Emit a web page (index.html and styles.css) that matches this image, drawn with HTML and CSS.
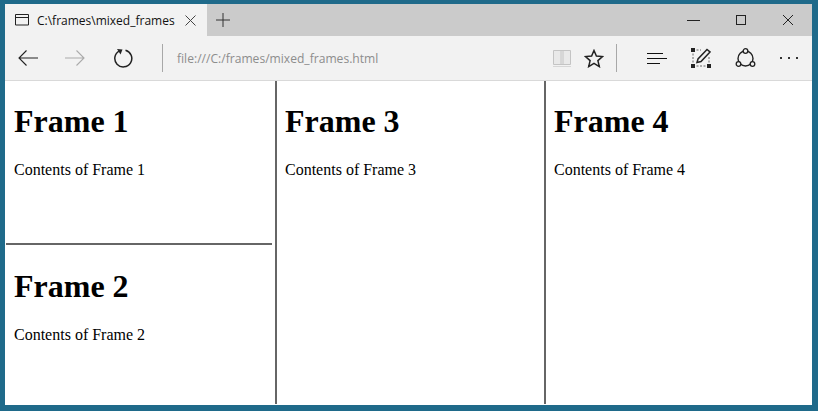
FILE: index.html
```html
<!DOCTYPE html>
<html lang="en">
<head>
<meta charset="utf-8">
<title>Mixed frames</title>
<link rel="stylesheet" href="styles.css">
</head>
<body>
<div class="window">
  <div class="tabstrip">
    <div class="tab">
      <svg class="tab-icon" width="14" height="12" viewBox="0 0 14 12"><path d="M.5.5h13v10.500h-13zM.5 3.500h13" fill="none" stroke="#222"/></svg>
      <span class="tab-title">C:\frames\mixed_frames</span>
      <svg class="tab-close" width="11" height="11" viewBox="0 0 11 11"><path d="M.5.5l10 10M10.500.5l-10 10" stroke="#444" fill="none"/></svg>
    </div>
    <svg class="new-tab" width="14" height="14" viewBox="0 0 14 14"><path d="M7 0v14M0 7h14" stroke="#333" fill="none"/></svg>
    <div class="win-controls">
      <svg width="13" height="12" viewBox="0 0 13 12"><path d="M0 6.500h13" stroke="#222" fill="none"/></svg>
      <svg width="12" height="12" viewBox="0 0 12 12"><rect x="1.500" y="1.500" width="9" height="9" stroke="#222" fill="none"/></svg>
      <svg width="12" height="12" viewBox="0 0 12 12"><path d="M1 1l10 10M11 1L1 11" stroke="#222" fill="none"/></svg>
    </div>
  </div>
  <div class="toolbar">
    <div class="nav">
      <svg width="20" height="16" viewBox="0 0 20 16"><path d="M20 8H1M8.500.5L1 8l7.500 7.500" stroke="#222" fill="none" stroke-width="1.100"/></svg>
      <svg width="20" height="16" viewBox="0 0 20 16"><path d="M0 8h19M11.500.5L19 8l-7.500 7.500" stroke="#aaa" fill="none" stroke-width="1.100"/></svg>
      <svg class="refresh" width="20" height="20" viewBox="0 0 20 20"><path d="M6.500 2.800A8.500 8.500 0 1 0 12.500 2.200" stroke="#222" fill="none" stroke-width="1.500"/><path d="M4 1L9.500 1.500 7.500 6.500z" fill="#222"/></svg>
    </div>
    <div class="sep sep-left"></div>
    <div class="address">file:///C:/frames/mixed_frames.html</div>
    <div class="tools-a">
      <svg width="20" height="19" viewBox="0 0 20 19"><path d="M1.500 1.500h17v14h-17zM9 1.500v14M11 1.500v14" stroke="#c4c4c4" fill="#e9e9e9"/><path d="M1 17.500h18" stroke="#d6d6d6" fill="none"/></svg>
      <svg width="20" height="19" viewBox="0 0 20 19"><path d="M10 1.500l2.400 5.600 6.100.5-4.600 4 1.400 6L10 14.400l-5.300 3.200 1.400-6-4.600-4 6.100-.5z" stroke="#222" fill="none" stroke-width="1.500"/></svg>
    </div>
    <div class="sep sep-right"></div>
    <div class="tools-b">
      <svg width="20" height="13" viewBox="0 0 20 13"><path d="M0 1.500h16M0 6.500h20M0 11.500h13" stroke="#111" fill="none" stroke-width="1.200"/></svg>
      <svg width="20" height="20" viewBox="0 0 20 20"><path d="M2 2h8M2 2v16M2 18h16M18 9v9" stroke="#666" stroke-dasharray="2 1.500" fill="none"/><path d="M0 0h4v4H0zM0 16h4v4H0zM16 16h4v4h-4z" fill="#222"/><path d="M6 14.500l1-3.500L16 1.500l3 2.500-9 9.500z" stroke="#222" fill="#f2f2f2" stroke-width="1.500"/></svg>
      <svg width="21" height="20" viewBox="0 0 21 20"><circle cx="10.500" cy="10.500" r="7.500" stroke="#222" fill="none" stroke-width="1.400"/><circle cx="10.500" cy="3" r="2.300" fill="#f2f2f2" stroke="#222" stroke-width="1.300"/><circle cx="3.500" cy="16" r="2.300" fill="#f2f2f2" stroke="#222" stroke-width="1.300"/><circle cx="17.500" cy="16" r="2.300" fill="#f2f2f2" stroke="#222" stroke-width="1.300"/></svg>
      <svg width="18" height="3" viewBox="0 0 18 3"><path d="M0 0h2v2H0zM8 0h2v2H8zM16 0h2v2h-2z" fill="#333"/></svg>
    </div>
  </div>
  <div class="frames">
    <div class="col col-first">
      <section class="frame frame-top">
        <h1>Frame 1</h1>
        <p>Contents of Frame 1</p>
      </section>
      <section class="frame frame-bottom">
        <h1>Frame 2</h1>
        <p>Contents of Frame 2</p>
      </section>
    </div>
    <section class="frame col col-second">
      <h1>Frame 3</h1>
      <p>Contents of Frame 3</p>
    </section>
    <section class="frame col col-third">
      <h1>Frame 4</h1>
      <p>Contents of Frame 4</p>
    </section>
  </div>
</div>
</body>
</html>
```
FILE: styles.css
```css
* { box-sizing: border-box; }
html, body { margin: 0; height: 100%; }
body {
  width: 818px;
  height: 411px;
  overflow: hidden;
  background: #1f6a8a;
  padding: 4px 6px 6px 5px;
}
.window {
  height: 401px;
  display: flex;
  flex-direction: column;
  background: #fff;
}
.tabstrip {
  height: 32px;
  flex: none;
  display: flex;
  align-items: center;
  background: #cbcbcb;
  font-family: "Open Sans", "Noto Sans", sans-serif;
}
.tab {
  width: 202px;
  height: 32px;
  display: flex;
  align-items: center;
  padding-left: 10px;
  background: #f2f2f2;
}
.tab-icon { flex: none; }
.tab-title {
  width: 138px;
  margin-left: 8px;
  white-space: nowrap;
  font-size: 12px;
  color: #111;
}
.tab-close { margin-left: 10px; flex: none; }
.new-tab { margin-left: 9px; }
.win-controls {
  margin-left: auto;
  display: flex;
  gap: 35px;
  padding-right: 18px;
}
.toolbar {
  height: 45px;
  flex: none;
  display: flex;
  align-items: center;
  background: #f2f2f2;
  border-bottom: 1px solid #d9d9d9;
  font-family: "Open Sans", "Noto Sans", sans-serif;
}
.nav {
  display: flex;
  align-items: center;
  gap: 27px;
  padding-left: 13px;
}
.refresh { margin-left: 1px; }
.sep { width: 1px; height: 28px; background: #a8a8a8; flex: none; }
.sep-left { margin-left: 29px; }
.address {
  width: 375px;
  margin-left: 14px;
  font-size: 12.1px;
  color: #8d8d8d;
  white-space: nowrap;
}
.tools-a { display: flex; align-items: center; gap: 12px; }
.sep-right { margin-left: 12px; }
.tools-b {
  display: flex;
  align-items: center;
  gap: 24px;
  padding-left: 30px;
}
.frames {
  flex: 1;
  min-height: 0;
  display: flex;
  padding: 0 0 1px 1px;
  font-family: "Liberation Serif", serif;
  color: #000;
}
.col { height: 100%; }
.col-first {
  width: 266px;
  flex: none;
  margin-right: 3px;
  display: flex;
  flex-direction: column;
}
.col-second {
  width: 269px;
  flex: none;
  border-left: 2px solid #666;
}
.col-third {
  flex: 1;
  border-left: 2px solid #666;
}
.frame { padding: 0 8px; overflow: hidden; }
.col-second, .col-third { padding-left: 8px; }
.frame-top { height: 164px; flex: none; margin-bottom: 1px; border-bottom: 2px solid #666; }
.frame-bottom { flex: 1; }
h1 {
  margin: 22px 0 21px;
  font-size: 32px;
  line-height: 37px;
  font-weight: bold;
}
p {
  margin: 0;
  font-size: 16px;
  line-height: 18px;
}
```
